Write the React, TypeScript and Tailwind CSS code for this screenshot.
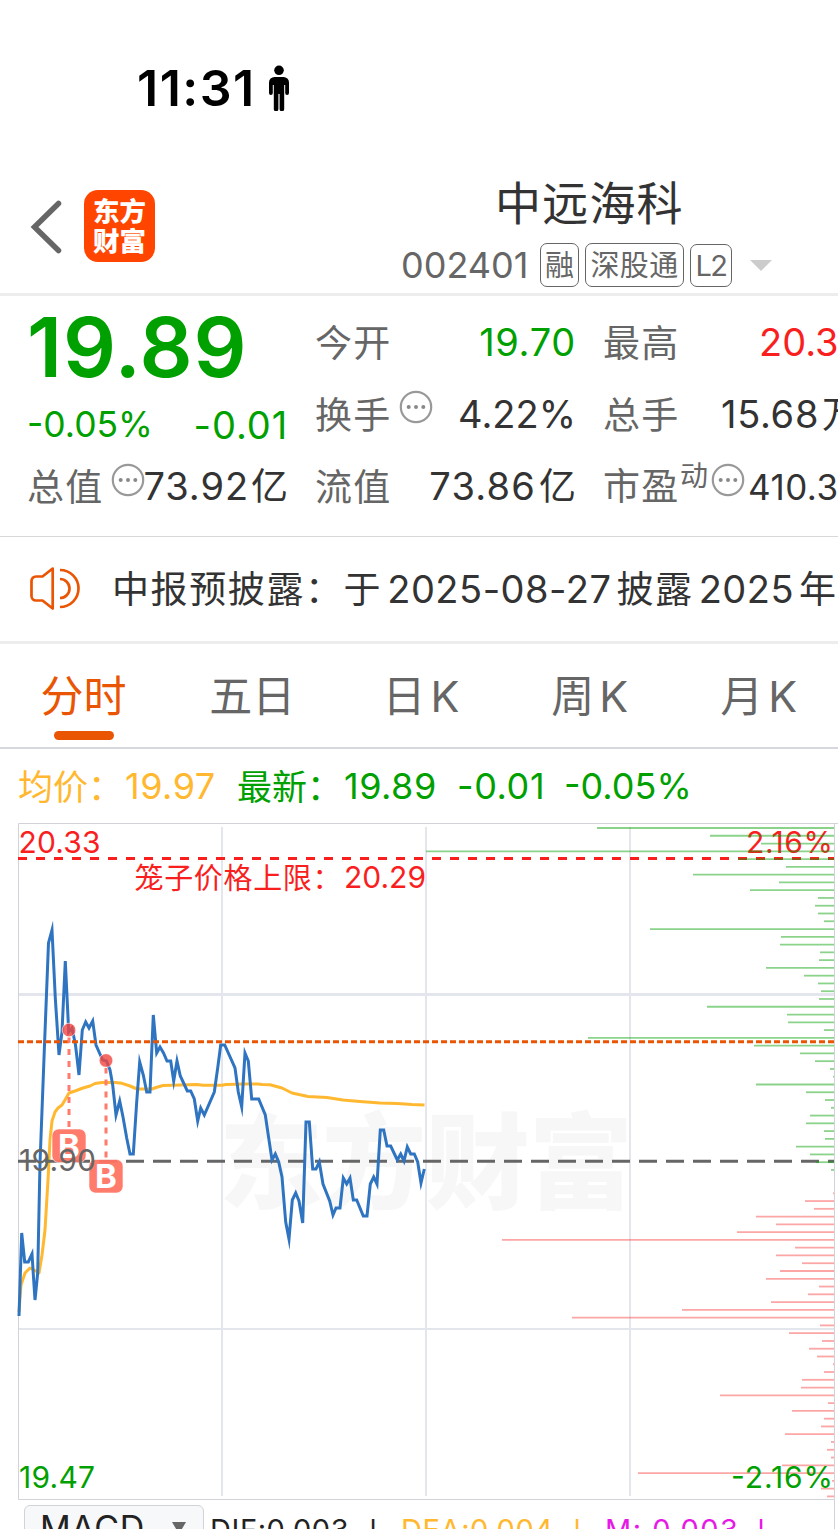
import type { ReactNode } from "react";

const GREEN_BARS = [
  597, 710, 761, 426, 738, 786, 693, 779, 750, 818, 815, 818, 824, 650, 781, 780, 820, 819, 766, 804, 818, 821, 819, 707,
  787, 788, 824, 588, 754, 800, 815, 830, 833, 756, 806, 825, 831, 810, 806, 824, 825, 796, 810, 816, 831,
];

const RED_BARS = [
  833, 805, 814, 756, 776, 737, 502, 795, 776, 802, 780, 766, 819, 808, 771, 682, 572, 820, 789, 822, 809, 817, 833, 824,
  802, 801, 720, 828, 792, 824, 821, 785, 831, 827, 831, 782, 638, 832, 821, 827,
];

const BAR_TOP = 828;
const BAR_STEP = 7.772;
const RED_OFFSET = 47;

const PRICE_LINE =
  "19,1316 21.7,1233 24.7,1262 28.3,1262 32,1254 35,1300 37.7,1273 40,1163 44.5,1045 48.5,943 52,930 55.3,998 59,1055 62,1032 65.3,961 68.7,1032 72,1028 75.5,1045 79,1075 82.3,1030 85.7,1022 89,1028 92.7,1021 96,1045 99.5,1053 102.7,1060 106.5,1061 110,1070 112.7,1085 116,1115 119.7,1101 123,1117 126.7,1138 130,1154 133.3,1154 136.7,1102 139.7,1062 143.3,1075 146.7,1092 150,1092 153.3,1015 156.7,1053 160,1047 163.5,1053 167,1061 170.7,1061 173.7,1081 177,1061 180.3,1076 187.3,1091 190.7,1091 194.3,1099 197.7,1121 200.7,1108 204.3,1115 214.3,1092 217.7,1068 220.7,1045 224.7,1045 235,1068 238.3,1092 241.7,1107 245,1053 248.3,1061 251.7,1099 258.7,1099 265.3,1115 268.7,1138 272,1160 275.3,1154 278.7,1162 282,1177 285.7,1222 289,1239 292.3,1200 295.7,1193 299,1201 302.7,1223 306,1122 309.3,1122 312.7,1169 316,1169 319.3,1162 323,1184 329.7,1201 333,1215 336,1208 340,1208 343.3,1178 346.7,1184 350,1178 353.3,1200 356.7,1200 363.3,1216 367,1216 370.3,1184 373.7,1177 377,1184 380.3,1130 383.7,1130 387,1146 390.7,1146 397.3,1160 400.7,1154 404,1161 407.3,1147 410.7,1154 414.3,1154 417.7,1162 421,1183 424.3,1169";

const AVERAGE_LINE =
  "19,1312 21,1285 25,1273 30,1268 34,1270 39,1273 42,1255 45,1230 48,1180 50,1140 52,1121 55,1112 58,1108 62,1105 65,1100 69,1093 75,1091 83,1088 90,1086 95,1083.5 102,1082.5 115,1082.5 122,1083.3 130,1086 137,1089 152,1089 156,1087.5 163,1085.5 180,1085 197,1084.5 203,1085.3 222,1085.3 226,1084.5 245,1084 258,1084 262,1084.5 270,1084.7 282,1088 292,1093 308,1096.5 327,1097.5 343,1100 360,1101.5 380,1103 397,1103.5 412,1104.5 424.5,1105";

function Bars({ starts, offset, color }: { starts: number[]; offset: number; color: string }) {
  return (
    <g stroke={color} strokeWidth="1.8" opacity="0.45">
      {starts.map((x, i) => {
        const y = BAR_TOP + (offset + i) * BAR_STEP;
        return <line key={i} x1={x} x2={834} y1={y} y2={y} />;
      })}
    </g>
  );
}

function MoreIcon({ className = "" }: { className?: string }) {
  return (
    <svg viewBox="0 0 34 34" className={`h-[34px] w-[34px] shrink-0 self-start ${className}`}>
      <circle cx="17" cy="17" r="15.2" fill="none" stroke="#999" strokeWidth="2.2" />
      <circle cx="9.7" cy="17" r="2" fill="#888" />
      <circle cx="17" cy="17" r="2" fill="#888" />
      <circle cx="24.3" cy="17" r="2" fill="#888" />
    </svg>
  );
}

function Label({ children }: { children: ReactNode }) {
  return <span className="-ml-[2px] w-[79px] shrink-0 translate-y-px text-[37px] tracking-[1.2px] text-[#666]">{children}</span>;
}

function Tag({ children, className }: { children: ReactNode; className: string }) {
  return (
    <span
      className={`flex items-center justify-center rounded-[7px] border-[1.5px] border-[#666] text-[29px] leading-none ${className}`}
    >
      {children}
    </span>
  );
}

function BuyMark({ x, dotY, top }: { x: number; dotY: number; top: number }) {
  return (
    <g>
      <line x1={x} x2={x} y1={dotY + 7.5} y2={top} stroke="#ff7b6b" strokeWidth="3" strokeDasharray="6 6" strokeDashoffset="0.5" />
      <circle cx={x} cy={dotY} r="6.8" fill="#f2453d" fillOpacity="0.8" stroke="#fff" strokeOpacity="0.6" />
      <rect x={x - 17} y={top} width="34" height="33.5" rx="6.5" fill="#ff7463" fillOpacity="0.94" stroke="#fff" strokeOpacity="0.6" />
      <text x={x} y={top + 28.5} fontSize="33" fontWeight="700" fill="#fff" textAnchor="middle">
        B
      </text>
    </g>
  );
}

function StatusBar() {
  return (
    <div className="flex h-40 pt-[63px] pl-[137px] text-black">
      <span className="w-[132px] text-[50px] leading-[50px] font-semibold tracking-[1.500px]">11:31</span>
      <svg viewBox="0 0 20 46" className="mt-[2px] h-[46px] w-[20px]">
        <circle cx="10" cy="5.3" r="4.8" />
        <path d="M5.5 12h9a5.5 5.5 0 0 1 5.5 5.5V28a1.9 1.9 0 0 1-3.8 0v-8h-1v24a2.1 2.1 0 0 1-4.6 0V29h-1.2v15a2.1 2.1 0 0 1-4.6 0V20h-1v8a1.9 1.9 0 0 1-3.8 0V17.500A5.500 5.500 0 0 1 5.500 12z" />
      </svg>
    </div>
  );
}

function Header() {
  return (
    <header className="flex h-[136px] border-b-[3px] border-[#ededed] pl-[30px]">
      <svg viewBox="0 0 34 56" className="mt-[39px] h-[56px] w-[34px]" fill="none" stroke="#666" strokeWidth="5.500">
        <path d="M28.500 4.500L4.500 28L28.500 51.500" strokeLinecap="round" />
      </svg>
      <div className="mt-[30px] ml-[20px] flex h-[72px] w-[71px] flex-col items-center justify-center rounded-[14px] bg-[#ff4500] text-[26.500px] leading-[30px] font-black text-white">
        <span>东方</span>
        <span>财富</span>
      </div>
      <div className="ml-[246px] flex flex-col">
        <h1 className="mt-[18px] pl-[94px] text-[46px] leading-[50px] tracking-[1.200px] text-[#333]">中远海科</h1>
        <div className="mt-[15px] flex h-[44px] items-center text-[#666]">
          <span className="w-[139px] text-[36px] leading-none">002401</span>
          <Tag className="h-[44px] w-[39px]">融</Tag>
          <Tag className="ml-[6px] h-[44px] w-[99px] tracking-[0.300px]">深股通</Tag>
          <Tag className="ml-[6px] h-[43px] w-[42px] tracking-[-1.500px]">L2</Tag>
          <svg viewBox="0 0 22 11" className="ml-[18px] h-[11px] w-[22px] fill-[#ccc]">
            <path d="M0 0H22L11 11Z" />
          </svg>
        </div>
      </div>
    </header>
  );
}

function Quote() {
  return (
    <section className="grid h-[241px] grid-cols-[259px_259px_259px] gap-x-[29px] overflow-hidden border-b border-[#d8d8d8] pt-[10px] pl-[29px] text-[38px] leading-[72px] whitespace-nowrap text-[#333]">
      <div>
        <div className="-ml-[2px] h-[82px] text-[83px] leading-[82px] font-semibold tracking-[0.800px] text-[#00a000]">19.89</div>
        <div className="-ml-[2px] flex h-[62px] items-baseline justify-between pt-[8px] leading-[54px] text-[#00a000]">
          <span className="text-[35.500px]">-0.05%</span>
          <span className="translate-y-[2px] text-[38px] tracking-[0.900px]">-0.01</span>
        </div>
        <div className="flex h-[72px] items-baseline">
          <Label>总值</Label>
          <MoreIcon className="mt-[13px] ml-[5px] -mr-[8px]" />
          <span className="ml-auto tracking-[0.900px]">73.92<span className="ml-[2px] text-[37px] tracking-normal">亿</span></span>
        </div>
      </div>
      <div>
        <div className="flex h-[72px] items-baseline justify-between">
          <Label>今开</Label>
          <span className="tracking-[0.700px] text-[#00a000]">19.70</span>
        </div>
        <div className="flex h-[72px] items-baseline">
          <Label>换手</Label>
          <MoreIcon className="mt-[12px] ml-[5px]" />
          <span className="ml-auto">4.22%</span>
        </div>
        <div className="flex h-[72px] items-baseline justify-between">
          <Label>流值</Label>
          <span className="tracking-[1.200px]">73.86<span className="ml-[3px] text-[37px] tracking-normal">亿</span></span>
        </div>
      </div>
      <div>
        <div className="flex h-[72px] items-baseline">
          <Label>最高</Label>
          <span className="ml-[77px] text-[#f91f1f]">20.3</span>
        </div>
        <div className="flex h-[72px] items-baseline">
          <Label>总手</Label>
          <span className="ml-[39px] tracking-[0.700px]">15.68<span className="ml-[3px] text-[37px]">万</span></span>
        </div>
        <div className="flex h-[72px] items-baseline">
          <Label>市盈</Label>
          <span className="-ml-[2px] self-start text-[28px] leading-[52px] text-[#666]">动</span>
          <MoreIcon className="mt-[13px] ml-[3px]" />
          <span className="ml-[3px] translate-y-px text-[35px] tracking-[0.500px]">410.3</span>
        </div>
      </div>
    </section>
  );
}

function Notice() {
  return (
    <section className="flex h-[107px] items-center overflow-hidden border-b-[3px] border-[#ededed] pl-[29px] whitespace-nowrap text-[#333]">
      <svg viewBox="0 0 52 44" className="mb-[3px] h-[44px] w-[52px] shrink-0" fill="none" stroke="#ea5504" strokeWidth="2.7">
        <path d="M23.700 2.500L13.500 10.500H7A4.500 4.500 0 0 0 2.500 15V30A4.500 4.500 0 0 0 7 34.500H13.500L23.700 42.500Z" strokeLinejoin="round" />
        <path d="M31 4A18.500 18.500 0 0 1 31 41M31 13A9.500 9.500 0 0 1 31 32" />
      </svg>
      <span className="ml-[31px] translate-y-px text-[37px] tracking-[1.600px]">中报预披露：于</span>
      <span className="ml-[5px] text-[38px] tracking-[0.500px]">2025-08-27</span>
      <span className="ml-[5px] translate-y-px text-[37px] tracking-[1.600px]">披露</span>
      <span className="ml-[5px] text-[38px] tracking-[0.500px]">2025</span>
      <span className="ml-[5px] translate-y-px text-[37px]">年</span>
    </section>
  );
}

function Tabs() {
  const base = "flex h-full flex-1 flex-col items-center pt-[27px] text-[43px] leading-[50px]";
  return (
    <nav className="flex h-[105px] border-b-2 border-[#d5d8dd] text-[#666]">
      <div className="-ml-px flex w-[844px] shrink-0">
        <div className={`${base} text-[#ea5504]`}>
          <span>分时</span>
          <span className="mt-[10px] ml-px h-[9px] w-[60px] rounded-full bg-[#ea5504]" />
        </div>
        <div className={base}>五日</div>
        <div className={base}><span>日<span className="ml-[5px]">K</span></span></div>
        <div className={base}><span>周<span className="ml-[5px]">K</span></span></div>
        <div className={base}><span>月<span className="ml-[5px]">K</span></span></div>
      </div>
    </nav>
  );
}

function Summary() {
  return (
    <div className="flex h-[74px] items-center pl-[18px] text-[36px] whitespace-nowrap text-[#00a000]">
      <span className="w-[107px] translate-y-px text-[35px] text-[#ffb830]">均价：</span>
      <span className="w-[112px] tracking-[0.500px] text-[#ffb830]">19.97</span>
      <span className="w-[107px] translate-y-px text-[35px]">最新：</span>
      <span className="w-[113px] tracking-[0.500px]">19.89</span>
      <span className="w-[107px] tracking-[0.600px]">-0.01</span>
      <span>-0.05%</span>
    </div>
  );
}

function Chart() {
  return (
    <svg viewBox="0 823 838 677" className="block h-[677px] w-[838px] shrink-0">
      <text x="219" y="1201" fontSize="104" fontWeight="900" fill="#f7f7f7" textLength="414">
        东方财富
      </text>
      <g fill="none" stroke="#e4e6ed" strokeWidth="2">
        <path d="M222 827V1496M426 827V1496M630 827V1496M19 1329H834" />
        <path d="M19 994.500H834" strokeWidth="3" />
      </g>
      <path d="M838 823.500H18.500V1499.500H834.500V824" fill="none" stroke="#d1d3d8" />
      <polyline points={AVERAGE_LINE} fill="none" stroke="#ffb830" strokeWidth="3" strokeLinejoin="round" />
      <line x1="18" x2="834" y1="1161.300" y2="1161.300" stroke="#666" strokeWidth="3" strokeDasharray="18 9" />
      <polyline points={PRICE_LINE} fill="none" stroke="#2f74c0" strokeWidth="3" strokeMiterlimit="10" />
      <line x1="18" x2="834" y1="858.500" y2="858.500" stroke="#f91f1f" strokeWidth="3" strokeDasharray="9 9" />
      <line x1="18" x2="834" y1="1041.700" y2="1041.700" stroke="#ea5504" strokeWidth="3" strokeDasharray="6 3" />
      <BuyMark x={69} dotY={1030} top={1129} />
      <BuyMark x={106} dotY={1060.5} top={1159.5} />
      <g fontSize="30">
        <text x="18.500" y="853" fill="#f91f1f" textLength="82">20.33</text>
        <text x="746" y="853" fill="#f91f1f" textLength="87">2.16%</text>
        <text x="134.500" y="888.500" fontSize="29" fill="#f91f1f" textLength="207">笼子价格上限：</text>
        <text x="344" y="888" fill="#f91f1f" textLength="82">20.29</text>
        <text x="19" y="1171" fill="#666" textLength="77">19.90</text>
        <text x="19" y="1487.500" fill="#00a000" textLength="76">19.47</text>
      </g>
      <Bars starts={GREEN_BARS} offset={0} color="#00a000" />
      <Bars starts={RED_BARS} offset={RED_OFFSET} color="#f93c3c" />
      <text x="731" y="1488" fontSize="30" fill="#00a000" textLength="102">-2.16%</text>
    </svg>
  );
}

function Indicators() {
  return (
    <div className="flex h-[29px] w-[835px] overflow-hidden border-r border-[#d1d3d8] pl-[24px] text-[29px] leading-[59px] tracking-[0.600px] whitespace-nowrap">
      <div className="mt-[5px] flex h-[60px] w-[180px] shrink-0 rounded-[6px] border border-[#d1d3d8] bg-[#f7f8fa] pl-[15px] text-[#222]">
        <span className="w-[132px] text-[34px] leading-[43px] tracking-[0.600px]">MACD</span>
        <svg viewBox="0 0 14 12" className="mt-[16px] h-[12px] w-[14px] fill-[#666]">
          <path d="M0 0H14L7 12Z" />
        </svg>
      </div>
      <span className="ml-[6px] w-[151px] shrink-0 text-[#222]">DIF:0.003</span>
      <span className="w-[40px] shrink-0 text-[#222]">↓</span>
      <span className="w-[164px] shrink-0 text-[#ffb830]">DEA:0.004</span>
      <span className="w-[40px] shrink-0 text-[#ffb830]">↓</span>
      <span className="w-[144px] shrink-0 tracking-[1.500px] text-[#e619e6]">M: 0.003</span>
      <span className="text-[#e619e6]">↓</span>
    </div>
  );
}

export default function App() {
  return (
    <main className="flex h-[1529px] w-[838px] flex-col overflow-hidden bg-white font-['Inter','Noto_Sans_CJK_SC',sans-serif]">
      <StatusBar />
      <Header />
      <Quote />
      <Notice />
      <Tabs />
      <Summary />
      <Chart />
      <Indicators />
    </main>
  );
}
